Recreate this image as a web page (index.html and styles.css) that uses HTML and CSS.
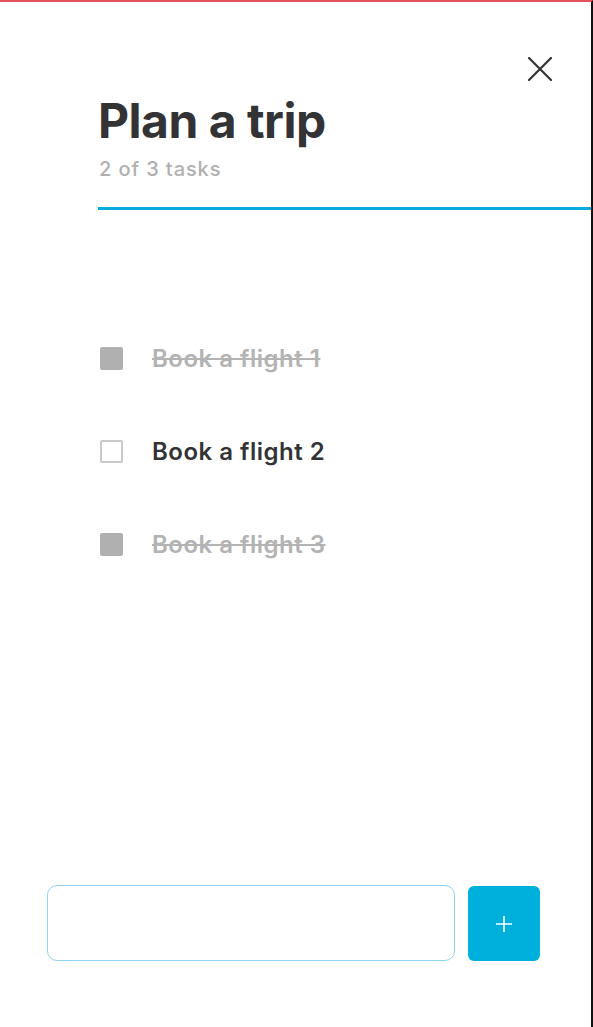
FILE: index.html
```html
<!DOCTYPE html>
<html lang="en">
<head>
<meta charset="utf-8">
<title>Plan a trip</title>
<link rel="stylesheet" href="styles.css">
</head>
<body>
<div class="frame">
  <header class="header">
    <div class="titles">
      <h1 class="title">Plan a trip</h1>
      <p class="subtitle">2 of 3 tasks</p>
    </div>
    <button class="close" aria-label="Close">
      <svg width="24" height="24" viewBox="0 0 24 24"><path d="M1 1 L23 23 M23 1 L1 23" stroke="#333" stroke-width="2.2" fill="none" stroke-linecap="round"/></svg>
    </button>
  </header>
  <div class="rule"></div>
  <ul class="tasks">
    <li class="task done"><span class="box"></span><span class="label">Book a flight 1</span></li>
    <li class="task"><span class="box"></span><span class="label">Book a flight 2</span></li>
    <li class="task done"><span class="box"></span><span class="label">Book a flight 3</span></li>
  </ul>
  <div class="composer">
    <input class="field" type="text" aria-label="New task">
    <button class="add" aria-label="Add">
      <svg width="18" height="18" viewBox="0 0 18 18"><path d="M9 1 V17 M1 9 H17" stroke="#fff" stroke-width="1.6" fill="none"/></svg>
    </button>
  </div>
</div>
</body>
</html>
```

FILE: styles.css
```css
* { box-sizing: border-box; }
html, body { margin: 0; padding: 0; background: #fff; }
body { font-family: Inter, "Noto Sans", sans-serif; color: #333335; }

.frame {
  width: 593px;
  height: 1027px;
  border-top: 2px solid #e8525c;
  border-right: 2px solid #111;
  display: flex;
  flex-direction: column;
  background: #fff;
}

.header {
  display: flex;
  padding-left: 98px;
}
.titles { flex: 1; padding-top: 90px; }
.title {
  margin: 0;
  font-size: 48px;
  line-height: 58px;
  font-weight: 700;
  letter-spacing: -0.5px;
  color: #333335;
}
.subtitle {
  margin: 7px 0 0 1px;
  font-size: 20px;
  line-height: 24px;
  font-weight: 500;
  letter-spacing: 0.9px;
  color: #b0b0b0;
}
.close {
  margin: 55px 39px 0 0;
  width: 24px;
  height: 24px;
  padding: 0;
  border: 0;
  background: none;
  display: flex;
}

.rule {
  margin: 26px 0 0 98px;
  height: 3px;
  background: #08acdc;
}

.tasks {
  list-style: none;
  margin: 0;
  padding: 133px 0 0 100px;
  display: flex;
  flex-direction: column;
  gap: 63px;
}
.task {
  display: flex;
  align-items: center;
  gap: 29px;
  height: 30px;
  font-size: 24px;
  font-weight: 600;
  letter-spacing: 0.5px;
  color: #333335;
}
.box {
  width: 23px;
  height: 23px;
  border: 2px solid #c9c9c9;
  border-radius: 2px;
  background: #fff;
}
.done .box { background: #b0b0b0; border-color: #b0b0b0; }
.done .label { color: #b3b3b3; text-decoration: line-through; text-decoration-thickness: 2px; }

.composer {
  margin-top: auto;
  display: flex;
  gap: 13px;
  padding: 0 51px 66px 47px;
}
.field {
  flex: 1;
  height: 76px;
  border: 1px solid #8dd4ee;
  border-radius: 10px;
  font: inherit;
  outline: none;
}
.add {
  width: 72px;
  height: 75px;
  margin-top: 1px;
  border: 0;
  border-radius: 6px;
  background: #00b0dc;
  display: flex;
  align-items: center;
  justify-content: center;
  padding: 0;
}
```
